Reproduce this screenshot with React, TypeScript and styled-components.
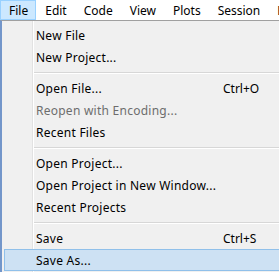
import styled, { createGlobalStyle } from "styled-components";

const GlobalStyle = createGlobalStyle`
  html, body {
    margin: 0;
    padding: 0;
    background: #f0f0f0;
    overflow: hidden;
  }
  body {
    font-family: "Noto Sans", "Liberation Sans", Arial, sans-serif;
    font-size: 12px;
    color: #000;
  }
`;

const Window = styled.div`
  width: 279px;
  height: 272px;
  overflow: hidden;
`;

const MenuBar = styled.div`
  display: flex;
  height: 20px;
  background: #ffffff;
  white-space: nowrap;
`;

const BarItem = styled.div<{ $active?: boolean }>`
  display: flex;
  align-items: center;
  height: 20px;
  box-sizing: border-box;
  padding: 0 7px 0 8px;
  border: 1px solid ${(p) => (p.$active ? "#99d1ff" : "transparent")};
  background: ${(p) => (p.$active ? "#cce8ff" : "transparent")};
`;

const Popup = styled.div`
  width: 320px;
  box-sizing: border-box;
  border-top: 1px solid #a0a0a0;
  border-left: 2px solid #7396ca;
  padding: 3px 0 2px 2px;
  background: linear-gradient(
    to right,
    #f0f0f0 30px,
    #e2e2e2 30px,
    #e2e2e2 31px,
    #ffffff 31px,
    #ffffff 32px,
    #f0f0f0 32px
  );
`;

const Item = styled.div<{ $selected?: boolean; $disabled?: boolean }>`
  display: grid;
  grid-template-columns: 187px auto;
  align-items: center;
  height: 22px;
  box-sizing: border-box;
  padding-left: 31px;
  border: 1px solid ${(p) => (p.$selected ? "#90c0ea" : "transparent")};
  background: ${(p) => (p.$selected ? "#cde1f3" : "transparent")};
  color: ${(p) => (p.$disabled ? "#6d6d6d" : "#000")};
  letter-spacing: 0.25px;
  white-space: nowrap;
`;

const Shortcut = styled.span`
  color: #000;
  letter-spacing: 0;
`;

const Separator = styled.div`
  height: 9px;
  display: flex;
  align-items: center;
  padding-left: 30px;

  &::after {
    content: "";
    flex: 1;
    height: 1px;
    background: #d7d7d7;
    border-bottom: 1px solid #ffffff;
  }
`;

type Entry =
  | { sep: true }
  | { label: string; shortcut?: string; disabled?: boolean; selected?: boolean };

const entries: Entry[] = [
  { label: "New File" },
  { label: "New Project..." },
  { sep: true },
  { label: "Open File...", shortcut: "Ctrl+O" },
  { label: "Reopen with Encoding...", disabled: true },
  { label: "Recent Files" },
  { sep: true },
  { label: "Open Project..." },
  { label: "Open Project in New Window..." },
  { label: "Recent Projects" },
  { sep: true },
  { label: "Save", shortcut: "Ctrl+S" },
  { label: "Save As...", selected: true },
];

const bar = ["File", "Edit", "Code", "View", "Plots", "Session", "Build"];

export default function App() {
  return (
    <Window>
      <GlobalStyle />
      <MenuBar>
        {bar.map((b, i) => (
          <BarItem key={b} $active={i === 0}>
            {b}
          </BarItem>
        ))}
      </MenuBar>
      <Popup>
        {entries.map((e, i) =>
          "sep" in e ? (
            <Separator key={i} />
          ) : (
            <Item key={i} $selected={e.selected} $disabled={e.disabled}>
              <span>{e.label}</span>
              {e.shortcut && <Shortcut>{e.shortcut}</Shortcut>}
            </Item>
          )
        )}
      </Popup>
    </Window>
  );
}
